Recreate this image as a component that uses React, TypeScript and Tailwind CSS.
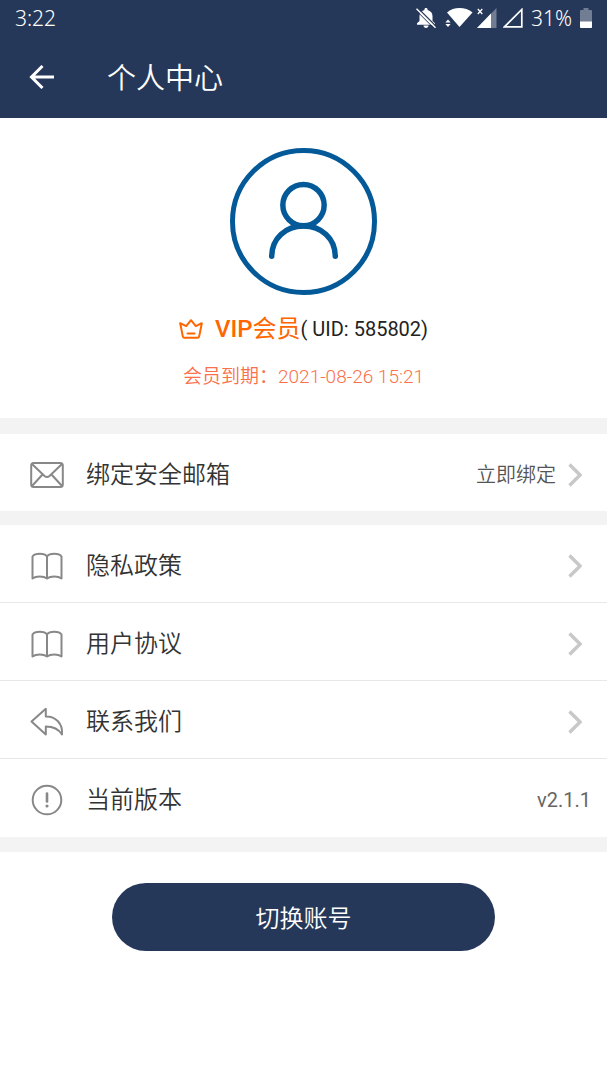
import type { ReactNode } from "react";

type IconProps = { className?: string };

function BellOffIcon() {
  return (
    <svg width="22" height="22" viewBox="0 0 22 22" aria-hidden="true">
      <path
        d="M11 1C12 1 12.600 1.700 12.600 2.500V3.100C15.800 3.900 17.500 6.400 17.500 9.300V14L20 16.300V17.800H2V16.300L4.500 14V9.300C4.500 6.400 6.200 3.900 9.400 3.100V2.500C9.400 1.700 10 1 11 1Z"
        fill="#fff"
      />
      <path d="M8.500 18.600H13.500C13.500 20 12.300 21 11 21S8.500 20 8.500 18.600Z" fill="#fff" />
      <path d="M2.500 .8L21.500 19.800" stroke="#263859" strokeWidth="1.300" />
      <path d="M1.500 1.800L20.500 20.800" stroke="#fff" strokeWidth="1.500" />
      <path d="M.5 2.800L19.500 21.800" stroke="#263859" strokeWidth="1" />
    </svg>
  );
}

function WifiIcon() {
  return (
    <svg width="28" height="20" viewBox="0 0 28 20" aria-hidden="true">
      <path d="M2 4.500C5.500 1.300 9.800 0 14.500 0S24 1.300 27.500 4.500L14.500 19z" fill="#fff" />
      <path d="M0 11h6v8H0z" fill="#263859" />
      <path d="M.4 14.500L3 11.500l2.600 3zM.4 16L3 19l2.600-3z" fill="#fff" />
    </svg>
  );
}

function SignalIcon() {
  return (
    <svg width="20" height="20" viewBox="0 0 20 20" aria-hidden="true">
      <path d="M19.500 0v20H0z" fill="#fff" opacity=".35" />
      <path d="M14 5.600V20H0z" fill="#fff" />
      <path d="M.8 1l4.500 5M5.300 1L.8 6" stroke="#fff" strokeWidth="1.300" />
    </svg>
  );
}

function EmptySignalIcon() {
  return (
    <svg width="20" height="20" viewBox="0 0 20 20" aria-hidden="true">
      <path d="M18.800 1.500v17.300H1.500z" fill="none" stroke="#fff" strokeWidth="1.700" />
    </svg>
  );
}

function BatteryIcon() {
  return (
    <svg width="12" height="20" viewBox="0 0 12 20" aria-hidden="true">
      <path d="M3.500 0h5v2H11q1 0 1 1v16q0 1-1 1H1q-1 0-1-1V3q0-1 1-1h2.500z" fill="#fff" opacity=".35" />
      <path d="M0 13.500h12V19q0 1-1 1H1q-1 0-1-1z" fill="#fff" />
    </svg>
  );
}

function BackIcon() {
  return (
    <svg width="26" height="24" viewBox="0 0 26 24" fill="none" stroke="#fff" strokeWidth="3" aria-hidden="true">
      <path d="M25 12H3M13.500 1L2.500 12l11 11" />
    </svg>
  );
}

function AvatarIcon() {
  return (
    <svg width="147" height="147" viewBox="0 0 148 148" fill="none" stroke="#045998" aria-hidden="true">
      <circle cx="74" cy="74" r="71.500" strokeWidth="5" />
      <circle cx="74" cy="57.500" r="20.800" strokeWidth="5.500" />
      <path d="M42 109C42 91 56 78.500 74 78.500S106 91 106 109" strokeWidth="5.500" strokeLinecap="round" />
    </svg>
  );
}

function CrownIcon() {
  return (
    <svg
      width="24"
      height="20"
      viewBox="0 0 24 20"
      fill="none"
      stroke="#f60"
      strokeWidth="2"
      strokeLinejoin="round"
      strokeLinecap="round"
      aria-hidden="true"
    >
      <path d="M1.200 4.200l6 3L12 1.200l4.800 6 6-3-2.600 13.200q-.3 1.400-1.700 1.400H5.500q-1.400 0-1.700-1.400z" />
      <path d="M8.500 14.500h7" />
    </svg>
  );
}

function MailIcon() {
  return (
    <svg width="34" height="34" viewBox="0 0 34 34" fill="none" stroke="#888" strokeWidth="2" aria-hidden="true">
      <rect x="1.200" y="5" width="31.600" height="24" rx="2.500" />
      <path d="M2 6l12.500 12q2.500 2 5 0L32 6M2 28l10.500-11.500M32 28L21.500 16.500" />
    </svg>
  );
}

function BookIcon() {
  return (
    <svg
      width="34"
      height="34"
      viewBox="0 0 34 34"
      fill="none"
      stroke="#888"
      strokeWidth="2"
      strokeLinejoin="round"
      aria-hidden="true"
    >
      <path d="M17 7.500C14.500 3.700 5 3.700 2.500 7.500v22c3.500-2.800 11-2.800 14.500 0 3.500-2.800 11-2.800 14.500 0v-22C29 3.700 19.500 3.700 17 7.500zM17 7.500v22" />
    </svg>
  );
}

function ReplyIcon() {
  return (
    <svg
      width="34"
      height="34"
      viewBox="0 0 34 34"
      fill="none"
      stroke="#888"
      strokeWidth="2"
      strokeLinejoin="round"
      aria-hidden="true"
    >
      <path d="M1.500 16.500L15.800 3.800v7.700C25.500 11.300 33 18.500 32 29.500c-4-6.500-9-8-16.200-8v8z" />
    </svg>
  );
}

function InfoIcon() {
  return (
    <svg width="34" height="34" viewBox="0 0 34 34" fill="none" stroke="#888" aria-hidden="true">
      <circle cx="17" cy="17" r="14.300" strokeWidth="2" />
      <path d="M17 10.500v8" strokeWidth="2.600" strokeLinecap="round" />
      <circle cx="17" cy="23" r="1.600" fill="#888" stroke="none" />
    </svg>
  );
}

function ChevronIcon({ className }: IconProps) {
  return (
    <svg
      className={className}
      width="14"
      height="24"
      viewBox="0 0 14 24"
      fill="none"
      stroke="#c8c8c8"
      strokeWidth="3.400"
      aria-hidden="true"
    >
      <path d="M1.500 1.500L12 12 1.500 22.500" />
    </svg>
  );
}

type RowProps = {
  icon: ReactNode;
  label: string;
  value?: string;
};

function LinkRow({ icon, label, value }: RowProps) {
  return (
    <a href="#" className="flex h-[77px] items-center pt-1 pr-[25px] pl-[30px]">
      {icon}
      <span className="ml-[22px] flex-1 text-[24px] leading-9 text-[#333]">{label}</span>
      {value && <span className="text-[20px] leading-8 text-[#555]">{value}</span>}
      <ChevronIcon className="ml-3" />
    </a>
  );
}

export default function App() {
  return (
    <div className="min-h-screen bg-white font-[Roboto,'Noto_Sans_CJK_SC',sans-serif] font-[350]">
      <header className="bg-[#263859] text-white">
        <div className="flex h-9 items-center justify-between px-[15px] font-['Noto_Sans',sans-serif] text-[21px] leading-6">
          <span>3:22</span>
          <div className="flex items-center">
            <BellOffIcon />
            <span className="ml-2 flex items-center gap-1">
              <WifiIcon />
              <SignalIcon />
            </span>
            <span className="ml-1.5">
              <EmptySignalIcon />
            </span>
            <span className="mr-2 ml-2">31%</span>
            <BatteryIcon />
          </div>
        </div>
        <div className="flex h-[82px] items-center pl-[29px]">
          <button type="button" aria-label="返回">
            <BackIcon />
          </button>
          <h1 className="ml-[52px] pt-1 text-[29px] leading-10 font-[350]">个人中心</h1>
        </div>
      </header>

      <main>
        <section className="flex h-[300px] flex-col items-center pt-[30px]">
          <AvatarIcon />
          <div className="mt-4 flex items-center leading-9">
            <CrownIcon />
            <span className="ml-3 text-[24px] text-[#f60]">
              <span className="font-medium">VIP</span>
              <span className="font-normal">会员</span>
            </span>
            <span className="text-[20px] font-normal text-[#222]">( UID: 585802)</span>
          </div>
          <p className="mt-3.5 text-[19px] leading-8 text-[#f9704a]">
            会员到期：<span className="font-light">2021-08-26 15:21</span>
          </p>
        </section>

        <nav>
          <div className="border-t-16 border-b-14 border-[#f3f3f3]">
            <LinkRow icon={<MailIcon />} label="绑定安全邮箱" value="立即绑定" />
          </div>
          <ul className="border-b-15 border-[#f3f3f3]">
            <li className="border-b border-[#e8e8e8]">
              <LinkRow icon={<BookIcon />} label="隐私政策" />
            </li>
            <li className="border-b border-[#e8e8e8]">
              <LinkRow icon={<BookIcon />} label="用户协议" />
            </li>
            <li className="border-b border-[#e8e8e8]">
              <LinkRow icon={<ReplyIcon />} label="联系我们" />
            </li>
            <li className="flex h-[78px] items-center pt-1 pr-4 pl-[30px]">
              <InfoIcon />
              <span className="ml-[22px] flex-1 text-[24px] leading-9 text-[#333]">当前版本</span>
              <span className="text-[20px] leading-8 font-normal text-[#666]">v2.1.1</span>
            </li>
          </ul>
        </nav>

        <div className="px-28 py-[31px]">
          <button type="button" className="h-[68px] w-full rounded-full bg-[#263859] pt-1 text-[24px] text-white">
            切换账号
          </button>
        </div>
      </main>
    </div>
  );
}
